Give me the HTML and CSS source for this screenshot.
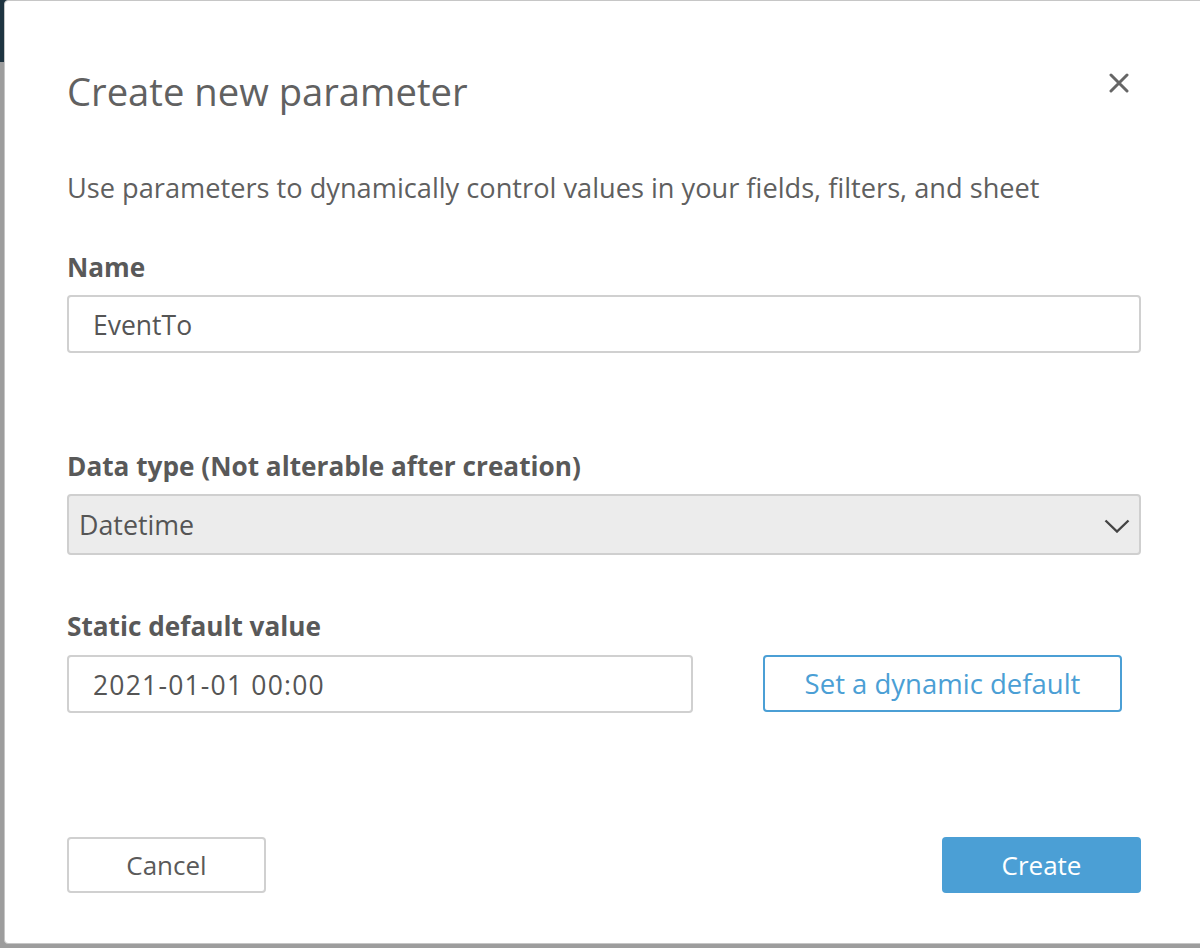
FILE: index.html
```html
<!DOCTYPE html>
<html lang="en">
<head>
<meta charset="utf-8">
<title>Create new parameter</title>
<link rel="stylesheet" href="styles.css">
</head>
<body>
<div class="modal">
  <div class="header">
    <h1 class="title">Create new parameter</h1>
    <button class="close" aria-label="Close">
      <svg width="20" height="20" viewBox="0 0 20 20"><path d="M2 2 L18 18 M18 2 L2 18" stroke="#666" stroke-width="3" stroke-linecap="round"/></svg>
    </button>
  </div>
  <p class="desc">Use parameters to dynamically control values in your fields, filters, and sheet</p>

  <label class="label label-name">Name</label>
  <div class="input full">EventTo</div>

  <label class="label label-type">Data type (Not alterable after creation)</label>
  <div class="select">
    <span>Datetime</span>
    <svg width="26" height="14" viewBox="0 0 26 14"><path d="M1.5 1.5 L13 12.5 L24.5 1.5" fill="none" stroke="#444" stroke-width="2.4"/></svg>
  </div>

  <label class="label label-static">Static default value</label>
  <div class="row">
    <div class="input half digits">2021-01-01 00:00</div>
    <button class="btn-outline">Set a dynamic default</button>
  </div>

  <div class="footer">
    <button class="btn-cancel">Cancel</button>
    <button class="btn-primary">Create</button>
  </div>
</div>
</body>
</html>
```

FILE: styles.css
```css
html, body {
  margin: 0;
  padding: 0;
  height: 100%;
  overflow: hidden;
}
body {
  background: linear-gradient(#1e3441 0, #1e3441 62px, #9d9d9d 62px);
  font-family: "Open Sans", "Noto Sans", sans-serif;
  color: #5a5a5a;
}
.modal {
  box-sizing: border-box;
  margin-left: 4px;
  width: 1210px;
  height: 944px;
  background: #fff;
  border: 1px solid #c6c6c6;
  border-radius: 4px;
  padding: 68px 62px 0 62px;
  display: flex;
  flex-direction: column;
}
.modal > * { width: 1074px; }
.header {
  display: flex;
  justify-content: space-between;
  align-items: center;
  height: 44px;
}
.title {
  margin: 0;
  font-size: 38.2px;
  font-weight: 400;
  line-height: 44px;
  color: #616161;
}
.close {
  border: 0;
  background: none;
  padding: 0;
  margin-right: 12px;
  margin-top: -16px;
  width: 20px;
  height: 20px;
  display: flex;
}
.desc {
  margin: 59px 0 0 0;
  font-size: 27.2px;
  line-height: 32px;
  color: #5f5f5f;
}
.label {
  display: block;
  font-size: 26.2px;
  font-weight: 700;
  line-height: 32px;
  color: #595959;
}
.label-name { margin-top: 47px; }
.label-type { margin-top: 97px; }
.label-static { margin-top: 55px; }
.input {
  box-sizing: border-box;
  margin-top: 12px;
  height: 58px;
  border: 2px solid #d0d0d0;
  border-radius: 4px;
  padding: 0 24px;
  font-size: 26.5px;
  line-height: 56px;
  color: #555;
}
.digits { letter-spacing: 1.2px; }
.full { width: 1074px; }
.select {
  box-sizing: border-box;
  margin-top: 12px;
  height: 61px;
  border: 2px solid #cfcfcf;
  border-radius: 4px;
  background: #ececec;
  padding: 0 9px 0 10px;
  display: flex;
  align-items: center;
  justify-content: space-between;
  font-size: 26.8px;
  color: #555;
}
.select svg { margin-top: 2px; }
.row {
  display: flex;
  align-items: flex-start;
  margin-top: 13px;
}
.row .input { margin-top: 0; }
.half { width: 626px; }
.btn-outline {
  box-sizing: border-box;
  margin-left: 70px;
  width: 359px;
  height: 57px;
  border: 2px solid #4b9fd5;
  border-radius: 4px;
  background: #fff;
  color: #4b9fd5;
  font-family: inherit;
  font-size: 27.5px;
  padding: 0;
}
.footer {
  display: flex;
  justify-content: space-between;
  margin-top: 124px;
}
.btn-cancel, .btn-primary {
  box-sizing: border-box;
  width: 199px;
  height: 56px;
  border-radius: 4px;
  font-family: inherit;
  font-size: 26px;
  padding: 0;
}
.btn-cancel {
  border: 2px solid #d0d0d0;
  background: #fff;
  color: #5a5a5a;
}
.btn-primary {
  border: 0;
  background: #4b9fd5;
  color: #fff;
}
```
